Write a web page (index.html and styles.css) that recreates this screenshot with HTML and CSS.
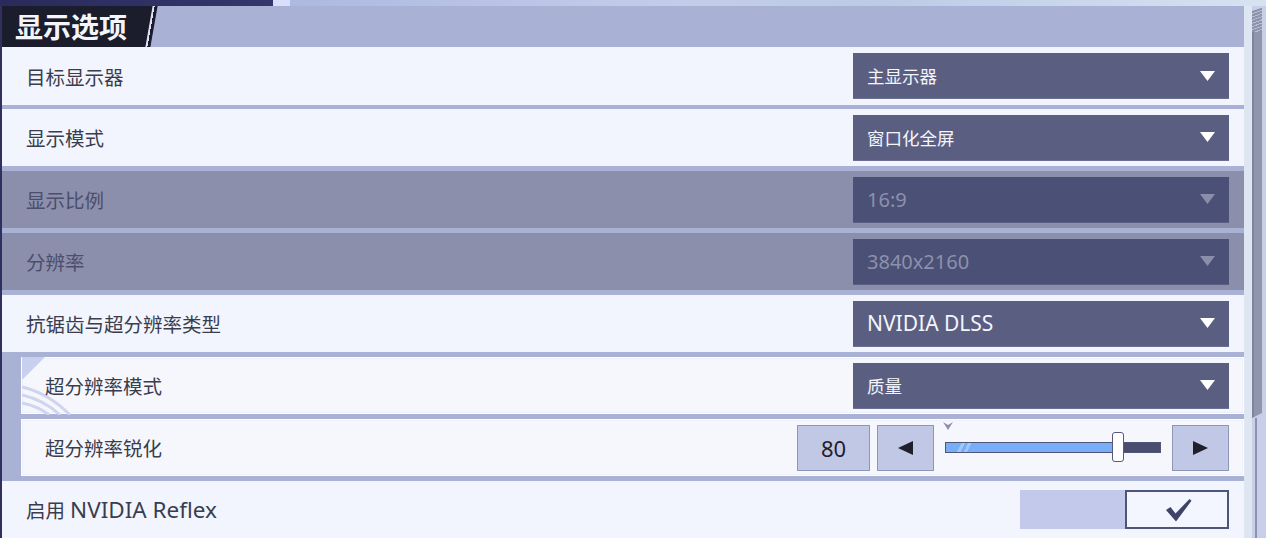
FILE: index.html
```html
<!DOCTYPE html>
<html lang="zh">
<head>
<meta charset="utf-8">
<title>显示选项</title>
<link rel="stylesheet" href="styles.css">
</head>
<body>
<div class="screen">
  <div class="topstrip">
    <div class="topdark"></div>
    <div class="topglow"></div>
    <div class="toprest"></div>
  </div>
  <div class="main">
    <div class="panel">
      <div class="header">
        <div class="title">显示选项</div>
        <div class="slash"></div>
      </div>
      <div class="rows">
        <div class="row">
          <div class="label">目标显示器</div>
          <div class="dropdown"><span class="value">主显示器</span>
            <svg class="caret" width="15" height="10" viewBox="0 0 15 10"><polygon points="0,0 15,0 7.5,10"/></svg></div>
        </div>
        <div class="row">
          <div class="label">显示模式</div>
          <div class="dropdown"><span class="value">窗口化全屏</span>
            <svg class="caret" width="15" height="10" viewBox="0 0 15 10"><polygon points="0,0 15,0 7.5,10"/></svg></div>
        </div>
        <div class="row disabled">
          <div class="label">显示比例</div>
          <div class="dropdown"><span class="value num">16:9</span>
            <svg class="caret" width="15" height="10" viewBox="0 0 15 10"><polygon points="0,0 15,0 7.5,10"/></svg></div>
        </div>
        <div class="row disabled">
          <div class="label">分辨率</div>
          <div class="dropdown"><span class="value num">3840x2160</span>
            <svg class="caret" width="15" height="10" viewBox="0 0 15 10"><polygon points="0,0 15,0 7.5,10"/></svg></div>
        </div>
        <div class="row">
          <div class="label">抗锯齿与超分辨率类型</div>
          <div class="dropdown"><span class="value latin">NVIDIA DLSS</span>
            <svg class="caret" width="15" height="10" viewBox="0 0 15 10"><polygon points="0,0 15,0 7.5,10"/></svg></div>
        </div>
        <div class="row sub">
          <svg class="deco" width="70" height="58" viewBox="0 0 70 58">
            <polygon points="0,0 23,0 0,23" fill="#c9cfee"/>
            <path d="M0 30 Q26 36 48 58" stroke="#cfd4f0" stroke-width="3" fill="none"/>
            <path d="M0 38 Q22 43 38 58" stroke="#cfd4f0" stroke-width="3" fill="none"/>
            <path d="M0 46 Q16 49 27 58" stroke="#cfd4f0" stroke-width="3" fill="none"/>
          </svg>
          <div class="label">超分辨率模式</div>
          <div class="dropdown"><span class="value">质量</span>
            <svg class="caret" width="15" height="10" viewBox="0 0 15 10"><polygon points="0,0 15,0 7.5,10"/></svg></div>
        </div>
        <div class="row sub">
          <div class="label">超分辨率锐化</div>
          <div class="slidergroup">
            <div class="numbox">80</div>
            <div class="arrowbtn"><svg width="15" height="14" viewBox="0 0 15 14"><polygon points="15,0 15,14 0,7"/></svg></div>
            <div class="slider">
              <svg class="marker" width="10" height="8" viewBox="0 0 10 8"><polygon points="0,0 5,3 10,0 5,8"/></svg>
              <div class="track"><div class="fill" style="width:172px"></div></div>
              <div class="handle" style="left:167px"></div>
            </div>
            <div class="arrowbtn"><svg width="15" height="14" viewBox="0 0 15 14"><polygon points="0,0 0,14 15,7"/></svg></div>
          </div>
        </div>
        <div class="row">
          <div class="label">启用 <span class="latin">NVIDIA Reflex</span></div>
          <div class="toggle">
            <div class="toggle-off"></div>
            <div class="toggle-box"><svg width="26" height="24" viewBox="0 0 26 24"><path d="M0 12 L4.5 9 L9.5 15.5 L23.5 1 L25.5 2.8 L10 23.5 Z"/></svg></div>
          </div>
        </div>
      </div>
    </div>
    <div class="scroll">
      <div class="thumb"></div>
      <div class="rail"></div>
    </div>
  </div>
</div>
</body>
</html>
```

FILE: styles.css
```css
* { box-sizing: border-box; }
html, body { margin: 0; padding: 0; }
body {
  width: 1266px;
  height: 538px;
  overflow: hidden;
  font-family: "Noto Sans", "Noto Sans CJK SC", sans-serif;
  background: #d6dff0;
}
.screen {
  width: 1266px;
  height: 538px;
  display: flex;
  flex-direction: column;
  overflow: hidden;
}
.topstrip {
  height: 6px;
  display: flex;
  flex: none;
}
.topdark {
  width: 273px;
  background: linear-gradient(to right, #2a2b5c, #34366c);
}
.topglow {
  width: 17px;
  background: #d8defb;
}
.toprest {
  flex: 1;
  background: linear-gradient(100deg, #aeb9e2 0%, #c3cdea 40%, #bccbe6 60%, #d7e2f1 100%);
}
.main {
  flex: 1;
  display: flex;
  min-height: 0;
}
.panel {
  width: 1244px;
  background: #a9b1d5;
  border-left: 2px solid #2f3060;
  display: flex;
  flex-direction: column;
}
.header {
  height: 41px;
  display: flex;
  flex: none;
}
.title {
  width: 152px;
  height: 41px;
  background: #1b1c2c;
  clip-path: polygon(0 0, 100% 0, calc(100% - 7px) 100%, 0 100%);
  color: #f4f5fb;
  font-family: "Noto Sans CJK SC", sans-serif;
  font-weight: 700;
  font-size: 28px;
  line-height: 41px;
  padding-left: 13px;
}
.slash {
  width: 5px;
  height: 41px;
  margin-left: -5px;
  background: linear-gradient(to right, #dde1f3 0 2px, #1b1c2c 2px 100%);
  transform: skewX(-10deg);
}
.rows {
  display: flex;
  flex-direction: column;
  gap: 5px;
}
.row {
  position: relative;
  height: 57px;
  flex: none;
  display: flex;
  align-items: center;
  justify-content: space-between;
  background: #f2f5fd;
  padding: 0 15px 0 24px;
}
.row:first-child { height: 58px; margin-bottom: -1px; }
.label {
  font-family: "Noto Sans", "Noto Sans CJK SC", sans-serif;
  font-size: 19.5px;
  color: #3a3d4e;
  white-space: nowrap;
}
.latin {
  font-size: 22.5px;
}
.dropdown {
  width: 376px;
  height: 46px;
  background: #5a5f82;
  display: flex;
  align-items: center;
  justify-content: space-between;
  padding: 0 14px 0 14px;
  border-bottom: 1px solid #6b7094;
}
.value {
  color: #f4f5fb;
  font-size: 17.5px;
  white-space: nowrap;
}
.value.latin { font-size: 21px; }
.value.num { font-size: 20px; }
.caret { fill: #ffffff; display: block; }
.disabled { background: #8b8fab; }
.disabled .label { color: #4b4e6c; }
.disabled .dropdown { background: #4b5076; border-bottom-color: #5a5f82; }
.disabled .value { color: #8d91ab; }
.disabled .caret { fill: #8a8ea9; }
.sub {
  margin-left: 19px;
  padding-left: 24px;
  background: #f6f7fd;
  box-shadow: inset 0 0 0 1px #fdfdff, inset 0 0 0 2px #eef0fa;
}
.deco {
  position: absolute;
  left: 1px;
  top: 0;
}
.sub .label { position: relative; }
.slidergroup {
  display: flex;
  align-items: center;
  height: 46px;
}
.numbox {
  width: 73px;
  height: 46px;
  background: #c0c8e6;
  border: 1.5px solid #8e96b6;
  color: #1f202b;
  font-size: 22px;
  display: flex;
  align-items: center;
  justify-content: center;
  margin-right: 7px;
}
.arrowbtn {
  width: 57px;
  height: 46px;
  background: #c0c8e6;
  border: 1.5px solid #8e96b6;
  display: flex;
  align-items: center;
  justify-content: center;
}
.arrowbtn svg { fill: #1f202b; display: block; }
.slider {
  position: relative;
  width: 216px;
  height: 46px;
  margin: 0 11px;
}
.marker {
  position: absolute;
  left: -2px;
  top: -3px;
  fill: #8a90aa;
}
.track {
  position: absolute;
  left: 0;
  right: 0;
  top: 17px;
  height: 11px;
  background: #4a4e6e;
  border: 1px solid #50567a;
}
.fill {
  height: 100%;
  background: linear-gradient(115deg, #78aef8 0 14px, #a2c8fb 14px 17px, #78aef8 17px 20px, #a2c8fb 20px 23px, #78aef8 23px);
}
.handle {
  position: absolute;
  top: 7px;
  width: 12px;
  height: 30px;
  background: #ffffff;
  border: 1.5px solid #555a7a;
  border-radius: 3px;
}
.toggle {
  display: flex;
  height: 39px;
}
.toggle-off {
  width: 105px;
  background: #c2c9ea;
}
.toggle-box {
  width: 104px;
  background: #f3f6fe;
  border: 2px solid #4f5577;
  display: flex;
  align-items: center;
  justify-content: center;
}
.toggle-box svg { fill: #3e4367; display: block; margin-left: 3px; }
.scroll {
  flex: 1;
  display: flex;
  flex-direction: column;
  background: linear-gradient(to right, #dee6f2 0 8px, #c7cfe9 8px 100%);
  padding-top: 2px;
}
.thumb {
  width: 10px;
  height: 410px;
  margin-left: 8px;
  flex: none;
  background:
    repeating-linear-gradient(160deg, #8d93ab 0 2px, #b9bfd3 2px 3px) top / 100% 24px no-repeat,
    linear-gradient(to right, #7f859e 0 2px, #8f95ad 2px 100%);
  clip-path: polygon(0 3px, 100% 0, 100% calc(100% - 5px), 0 100%);
}
.rail {
  flex: 1;
  width: 2px;
  margin-left: 11px;
  background: #8d93ab;
}
```
